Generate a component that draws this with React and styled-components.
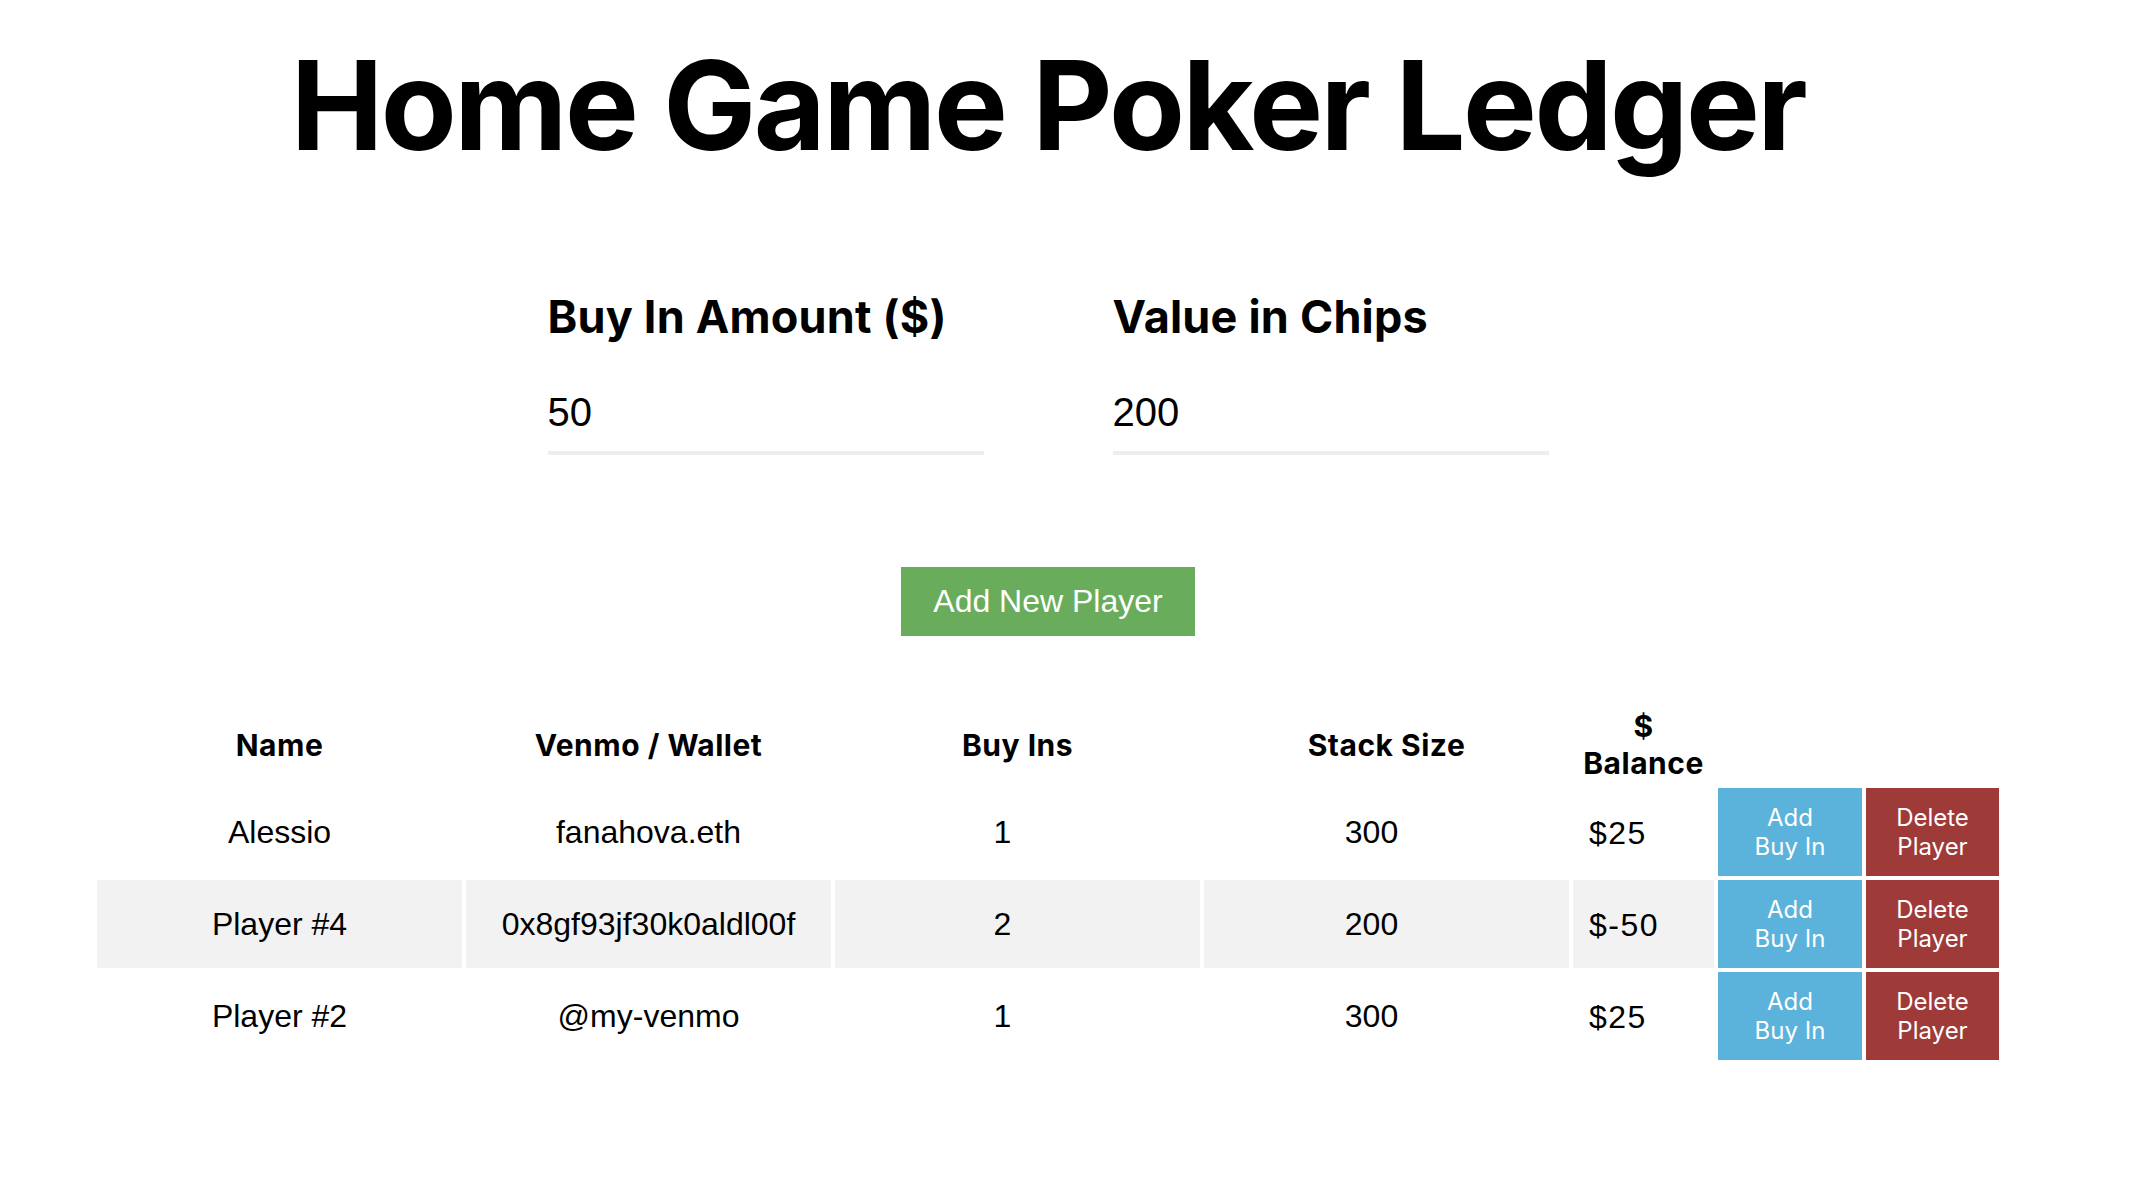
import React from 'react';
import styled, { createGlobalStyle } from 'styled-components';

const GlobalStyle = createGlobalStyle`
    body {
        margin: 0;
        background: #ffffff;
        color: #000000;
        font-family: 'Liberation Sans', Arial, sans-serif;
    }
`;

const Page = styled.div`
    box-sizing: border-box;
    width: 2144px;
    padding-right: 48px;
    display: flex;
    flex-direction: column;
    align-items: center;
`;

const Title = styled.h1`
    margin: 30px 0 0;
    font-family: 'Inter', sans-serif;
    font-size: 124px;
    font-weight: 700;
    letter-spacing: -2.5px;
    line-height: normal;
`;

const Settings = styled.div`
    margin-top: 109px;
    display: flex;
    gap: 129px;
`;

const Field = styled.label`
    width: 436px;
    display: flex;
    flex-direction: column;
`;

const FieldLabel = styled.span`
    font-family: 'Inter', sans-serif;
    font-size: 45px;
    font-weight: 700;
    letter-spacing: 0.2px;
    line-height: normal;
`;

const FieldInput = styled.input`
    margin-top: 46px;
    height: 45px;
    padding: 0 0 16px;
    border: none;
    border-bottom: 4px solid #eeeeee;
    outline: none;
    background: transparent;
    font-family: 'Liberation Sans', Arial, sans-serif;
    font-size: 40px;
    color: #000000;
`;

const AddPlayerButton = styled.button`
    margin-top: 112px;
    height: 69px;
    padding: 0 32px;
    border: none;
    background: #69ad5c;
    color: #ffffff;
    font-family: 'Liberation Sans', Arial, sans-serif;
    font-size: 32px;
    cursor: pointer;
`;

const Ledger = styled.div`
    margin-top: 70px;
    display: grid;
    grid-template-columns: 365px 365px 365px 365px 141px 144px 133px;
    grid-auto-rows: 88px;
    grid-template-rows: 78px;
    gap: 4px;
`;

const HeadCell = styled.div`
    display: flex;
    align-items: center;
    justify-content: center;
    text-align: center;
    font-family: 'Inter', sans-serif;
    font-size: 30px;
    font-weight: 700;
    letter-spacing: 0.5px;
    line-height: 37px;
`;

const Cell = styled.div`
    box-sizing: border-box;
    display: flex;
    align-items: center;
    justify-content: ${(p) => (p.$left ? 'flex-start' : 'center')};
    padding: ${(p) => (p.$left ? '2px 0 0 16px' : p.$shift ? '0 30px 0 0' : '0')};
    background: ${(p) => (p.$shade ? '#f2f2f2' : 'transparent')};
    font-size: 32px;
    letter-spacing: ${(p) => (p.$left ? '1.5px' : '0')};
    white-space: nowrap;
`;

const ActionButton = styled.button`
    padding: 0;
    border: none;
    background: ${(p) => (p.$variant === 'danger' ? '#9e3a38' : '#5bb2db')};
    color: #ffffff;
    font-family: 'Inter', sans-serif;
    font-size: 24px;
    line-height: 29px;
    text-align: center;
    cursor: pointer;
`;

const players = [
    { name: 'Alessio', wallet: 'fanahova.eth', buyIns: 1, stack: 300, balance: '$25' },
    { name: 'Player #4', wallet: '0x8gf93jf30k0aldl00f', buyIns: 2, stack: 200, balance: '$-50' },
    { name: 'Player #2', wallet: '@my-venmo', buyIns: 1, stack: 300, balance: '$25' },
];

const App = () => {
    return (
        <Page>
            <GlobalStyle />
            <Title>Home Game Poker Ledger</Title>
            <Settings>
                <Field>
                    <FieldLabel>Buy In Amount ($)</FieldLabel>
                    <FieldInput type='text' defaultValue='50' />
                </Field>
                <Field>
                    <FieldLabel>Value in Chips</FieldLabel>
                    <FieldInput type='text' defaultValue='200' />
                </Field>
            </Settings>
            <AddPlayerButton>Add New Player</AddPlayerButton>
            <Ledger>
                <HeadCell>Name</HeadCell>
                <HeadCell>Venmo / Wallet</HeadCell>
                <HeadCell>Buy Ins</HeadCell>
                <HeadCell>Stack Size</HeadCell>
                <HeadCell>
                    $<br />
                    Balance
                </HeadCell>
                <HeadCell />
                <HeadCell />
                {players.map((player, i) => {
                    const shade = i % 2 === 1;
                    return (
                        <React.Fragment key={player.name}>
                            <Cell $shade={shade}>{player.name}</Cell>
                            <Cell $shade={shade}>{player.wallet}</Cell>
                            <Cell $shade={shade} $shift>{player.buyIns}</Cell>
                            <Cell $shade={shade} $shift>{player.stack}</Cell>
                            <Cell $shade={shade} $left>{player.balance}</Cell>
                            <ActionButton>
                                Add
                                <br />
                                Buy In
                            </ActionButton>
                            <ActionButton $variant='danger'>
                                Delete
                                <br />
                                Player
                            </ActionButton>
                        </React.Fragment>
                    );
                })}
            </Ledger>
        </Page>
    );
};

export default App;
